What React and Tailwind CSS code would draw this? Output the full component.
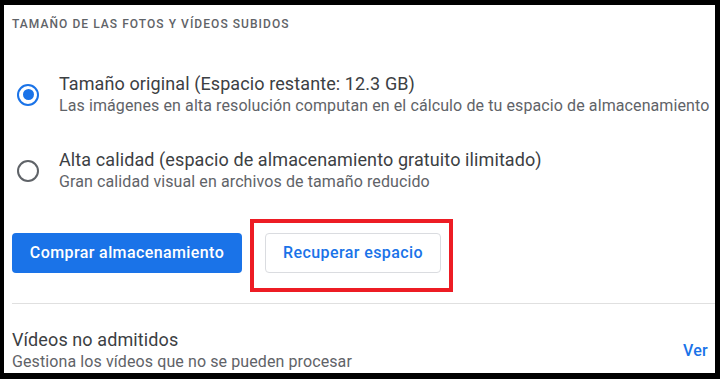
import React from "react";

function Radio({ checked }) {
  return (
    <span
      className={
        "flex h-[22px] w-[22px] shrink-0 items-center justify-center rounded-full border-[2.5px] " +
        (checked ? "border-[#1a73e8]" : "border-[#5f6368]")
      }
    >
      {checked && <span className="h-[11px] w-[11px] rounded-full bg-[#1a73e8]" />}
    </span>
  );
}

function Option({ checked, title, subtitle }) {
  return (
    <div className="flex items-center">
      <div className="flex w-[47px] pl-[5px]">
        <Radio checked={checked} />
      </div>
      <div>
        <div className="text-[18px] leading-[22px] tracking-[0.1px] text-[#3c4043]">{title}</div>
        <div className="whitespace-nowrap text-[16px] leading-[21px] tracking-[0.1px] text-[#5f6368]">{subtitle}</div>
      </div>
    </div>
  );
}

export default function App() {
  return (
    <div className="h-[379px] w-[720px] bg-black pb-[6px] pl-[4px] pr-[5px] pt-[5px] font-['Roboto',sans-serif]">
      <div className="h-full w-full overflow-hidden bg-white pl-[8px]">
        <div className="pt-[11px] text-[12px] font-medium leading-[16px] tracking-[1.05px] text-[#5f6368]">
          TAMAÑO DE LAS FOTOS Y VÍDEOS SUBIDOS
        </div>

        <div className="mt-[41px] flex flex-col gap-[33px]">
          <Option
            checked
            title="Tamaño original (Espacio restante: 12.3 GB)"
            subtitle="Las imágenes en alta resolución computan en el cálculo de tu espacio de almacenamiento"
          />
          <Option
            title="Alta calidad (espacio de almacenamiento gratuito ilimitado)"
            subtitle="Gran calidad visual en archivos de tamaño reducido"
          />
        </div>

        <div className="mt-[41px] flex items-center gap-[23px]">
          <button className="h-[40px] w-[230px] rounded-[4px] bg-[#1a73e8] text-[16px] font-medium tracking-[0.4px] text-white">
            Comprar almacenamiento
          </button>
          <div className="relative">
            <button className="h-[40px] w-[176px] rounded-[4px] border border-[#dadce0] bg-white text-[16px] font-medium tracking-[0.4px] text-[#1a73e8]">
              Recuperar espacio
            </button>
            <div className="pointer-events-none absolute -bottom-[19px] -left-[15px] -right-[12px] -top-[14px] border-[4px] border-[#ed1c24]" />
          </div>
        </div>

        <div className="mt-[30px] border-t border-[#e0e0e0]" />

        <div className="flex items-start justify-between pr-[7px] pt-[24px]">
          <div>
            <div className="text-[18px] leading-[24px] tracking-[0.1px] text-[#3c4043]">Vídeos no admitidos</div>
            <div className="text-[16px] leading-[20px] tracking-[0.1px] text-[#5f6368]">Gestiona los vídeos que no se pueden procesar</div>
          </div>
          <div className="pt-[13px] text-[16px] font-medium leading-[20px] tracking-[0.3px] text-[#1a73e8]">Ver</div>
        </div>
      </div>
    </div>
  );
}
